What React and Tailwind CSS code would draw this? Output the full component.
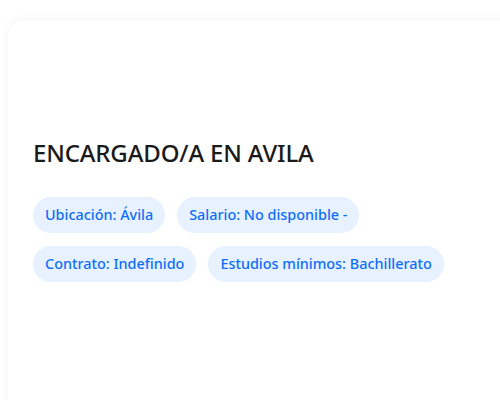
export default function App() {
  const tags = [
    ["Ubicación: Ávila", "Salario: No disponible -"],
    ["Contrato: Indefinido", "Estudios mínimos: Bachillerato"],
  ];

  return (
    <div className="h-screen bg-white overflow-hidden pt-5 pl-2" style={{ fontFamily: '"Noto Sans", "Open Sans", sans-serif' }}>
      <div className="w-[520px] h-[400px] bg-white rounded-2xl shadow-[0_0_12px_rgba(0,0,0,0.05)] px-[25px] pt-[117px]">
        <h1 className="text-[24px] leading-[32px] font-medium text-[#1a1a1a] tracking-[-0.15px]">
          ENCARGADO/A EN AVILA
        </h1>
        <div className="mt-[28px] flex flex-col gap-[13px]">
          {tags.map((row, i) => (
            <div key={i} className="flex gap-3">
              {row.map((t) => (
                <span
                  key={t}
                  className="h-9 px-3 flex items-center rounded-full bg-[#e7f1ff] text-[#0d6efd] text-[14.4px] font-medium"
                >
                  {t}
                </span>
              ))}
            </div>
          ))}
        </div>
      </div>
    </div>
  );
}
